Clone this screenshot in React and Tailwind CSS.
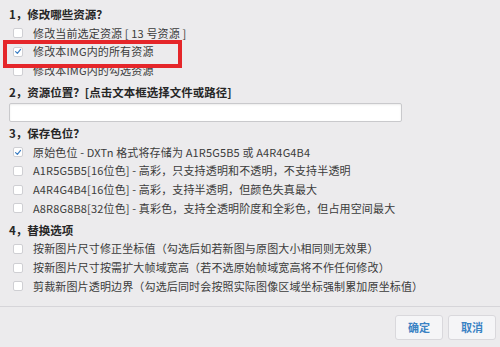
import React from 'react'

const font = { fontFamily: '"Noto Sans CJK SC", "Noto Sans", sans-serif' }

function Box({ checked }) {
  return (
    <span className="flex h-[10px] w-[10px] shrink-0 items-center justify-center rounded-[2px] border border-[#cfcfd3] bg-white">
      {checked && (
        <svg viewBox="0 0 10 10" className="h-[9px] w-[9px]">
          <path d="M2 5.2 L4.2 7.4 L8.2 2.4" fill="none" stroke="#3d7fc4" strokeWidth="1.5" strokeLinecap="round" strokeLinejoin="round" />
        </svg>
      )}
    </span>
  )
}

function Row({ checked, children }) {
  return (
    <div className="flex h-[18.67px] items-center pl-[4px]">
      <Box checked={checked} />
      <span className="ml-[10px] whitespace-nowrap text-[11px] leading-none tracking-[0.15px] text-[#3b3b3b]">{children}</span>
    </div>
  )
}

function Head({ children, className = '' }) {
  return (
    <div className={'flex h-[18px] items-center whitespace-nowrap text-[11.5px] font-bold leading-none text-[#262626] ' + className}>
      {children}
    </div>
  )
}

export default function App() {
  return (
    <div className="flex h-[347px] w-[500px] flex-col overflow-hidden bg-[#ecebed]" style={font}>
      <div className="relative flex-1 px-[9px] pt-[6px]">
        <Head>1，修改哪些资源？</Head>
        <Row>修改当前选定资源 [ 13 号资源 ]</Row>
        <Row checked>修改本IMG内的所有资源</Row>
        <Row>修改本IMG内的勾选资源</Row>

        <Head className="mt-[4px] h-[16px]">2，资源位置？[点击文本框选择文件或路径]</Head>
        <div className="mt-[1px] h-[19px] w-[393px] rounded-[2px] border border-[#c9c9cc] bg-white shadow-[inset_0_1px_2px_rgba(0,0,0,0.08)]" />

        <Head className="mt-[3px]">3，保存色位？</Head>
        <Row checked>原始色位 - DXTn 格式将存储为 A1R5G5B5 或 A4R4G4B4</Row>
        <Row>A1R5G5B5[16位色] - 高彩，只支持透明和不透明，不支持半透明</Row>
        <Row>A4R4G4B4[16位色] - 高彩，支持半透明，但颜色失真最大</Row>
        <Row>A8R8G8B8[32位色] - 真彩色，支持全透明阶度和全彩色，但占用空间最大</Row>

        <Head className="mt-[4px]">4，替换选项</Head>
        <Row>按新图片尺寸修正坐标值（勾选后如若新图与原图大小相同则无效果）</Row>
        <Row>按新图片尺寸按需扩大帧域宽高（若不选原始帧域宽高将不作任何修改）</Row>
        <Row>剪裁新图片透明边界（勾选后同时会按照实际图像区域坐标强制累加原坐标值）</Row>

        <div className="pointer-events-none absolute left-[3px] top-[40px] h-[28px] w-[179px] border-[4px] border-[#e5262a]" />
      </div>

      <div className="flex h-[41px] shrink-0 items-start justify-end gap-[5px] border-t border-[#d6d5d9] pr-[4px] pt-[8px]">
        <button className="flex h-[25px] w-[48px] items-center justify-center rounded-[3px] border border-[#d9d8dc] bg-[#f5f5f7] text-[11px] font-bold text-[#3a82c4]">
          确定
        </button>
        <button className="flex h-[25px] w-[48px] items-center justify-center rounded-[3px] border border-[#d9d8dc] bg-[#f5f5f7] text-[11px] font-bold text-[#3a82c4]">
          取消
        </button>
      </div>
    </div>
  )
}
